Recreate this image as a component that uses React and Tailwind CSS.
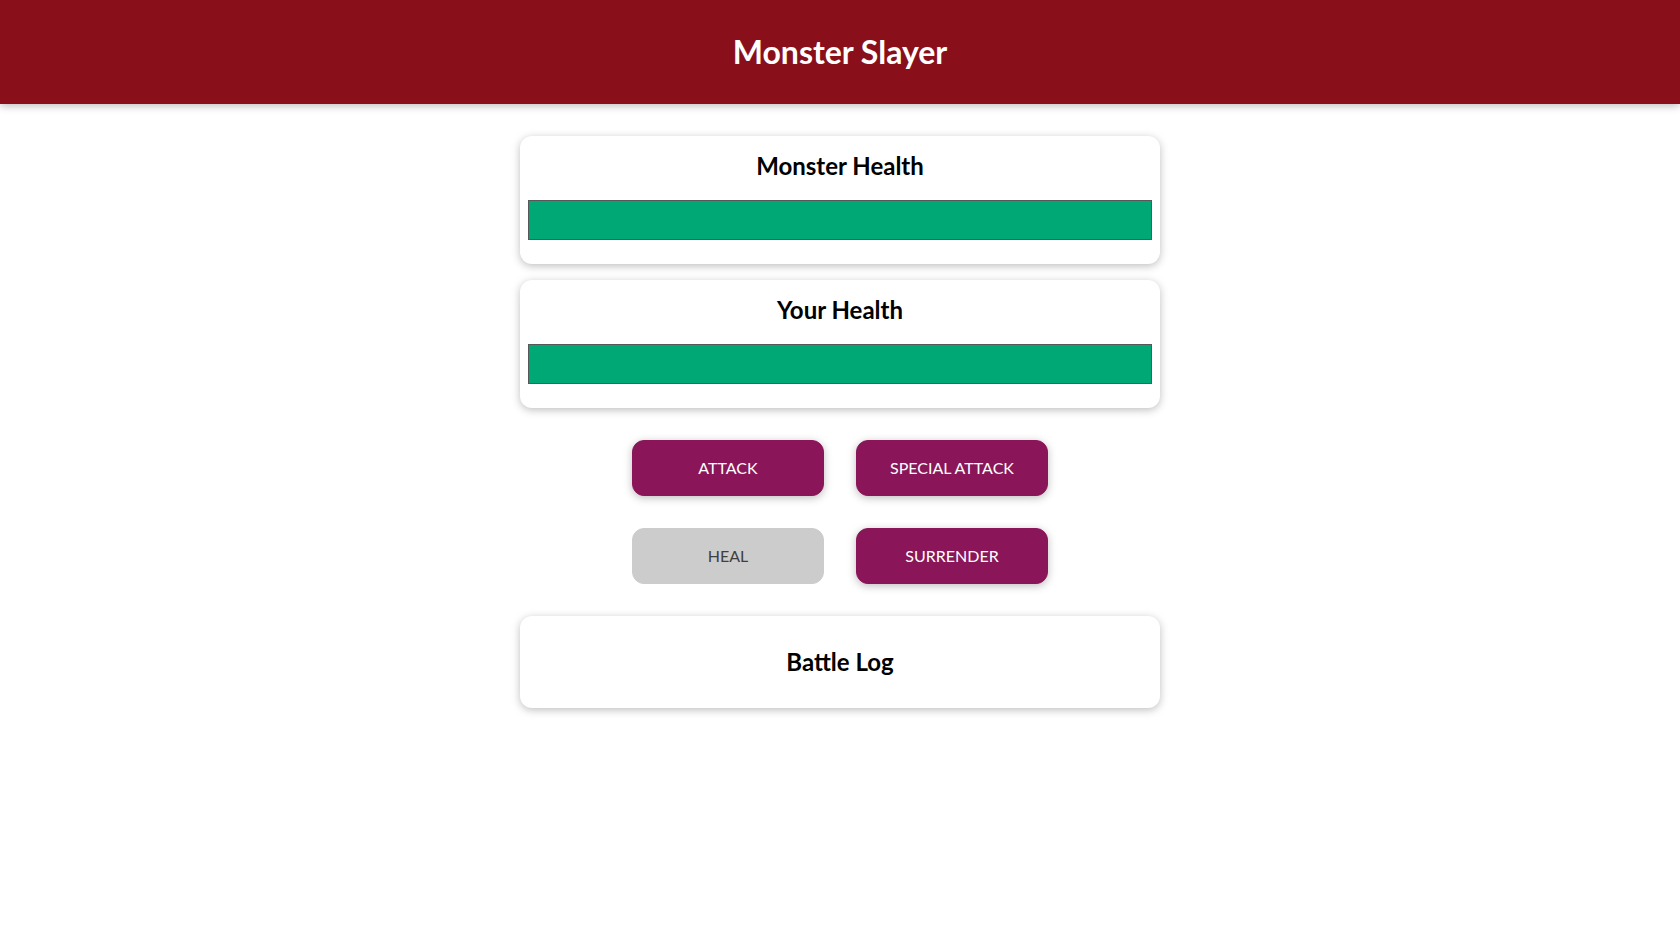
export default function App() {
  return (
    <div className="min-h-screen bg-white font-['Lato','Noto_Sans',sans-serif] text-black">
      {/* Header */}
      <header className="bg-[#89101a] p-2 text-center text-white shadow-[0_2px_8px_rgba(0,0,0,0.26)] mb-8">
        <h1 className="my-[21px] text-[32px] font-bold leading-[46px]">Monster Slayer</h1>
      </header>

      <section className="mx-auto w-[90%] max-w-[40rem]">
        <HealthCard title="Monster Health" value={100} />
        <HealthCard title="Your Health" value={100} />
      </section>

      {/* Controls */}
      <section className="mx-auto flex w-[90%] max-w-[40rem] flex-wrap justify-center">
        <ActionButton label="Attack" />
        <ActionButton label="Special Attack" />
        <ActionButton label="Heal" disabled />
        <ActionButton label="Surrender" />
      </section>

      <section className="mx-auto w-[90%] max-w-[40rem]">
        <div className="mt-4 rounded-xl p-2 text-center shadow-[0_2px_8px_rgba(0,0,0,0.26)]">
          <h2 className="my-5 text-2xl font-bold leading-9">Battle Log</h2>
        </div>
      </section>
    </div>
  );
}

function HealthCard({ title, value }) {
  return (
    <div className="mb-4 rounded-xl p-2 text-center shadow-[0_2px_8px_rgba(0,0,0,0.26)]">
      <h2 className="mx-1 mt-1 text-2xl font-bold leading-9">{title}</h2>
      <div className="mb-4 mt-4 h-10 w-full border border-[#575757] bg-[#fde5e5]">
        <div className="h-full bg-[#00a876]" style={{ width: `${value}%` }} />
      </div>
    </div>
  );
}

function ActionButton({ label, disabled = false }) {
  return (
    <button
      disabled={disabled}
      className={`m-4 h-14 w-48 rounded-xl border px-8 text-base uppercase leading-6 ${
        disabled
          ? 'border-[#cccccc] bg-[#cccccc] text-[#3f3f3f]'
          : 'border-[#8a1659] bg-[#8a1659] text-white shadow-[0_2px_8px_rgba(0,0,0,0.26)]'
      }`}
    >
      {label}
    </button>
  );
}
